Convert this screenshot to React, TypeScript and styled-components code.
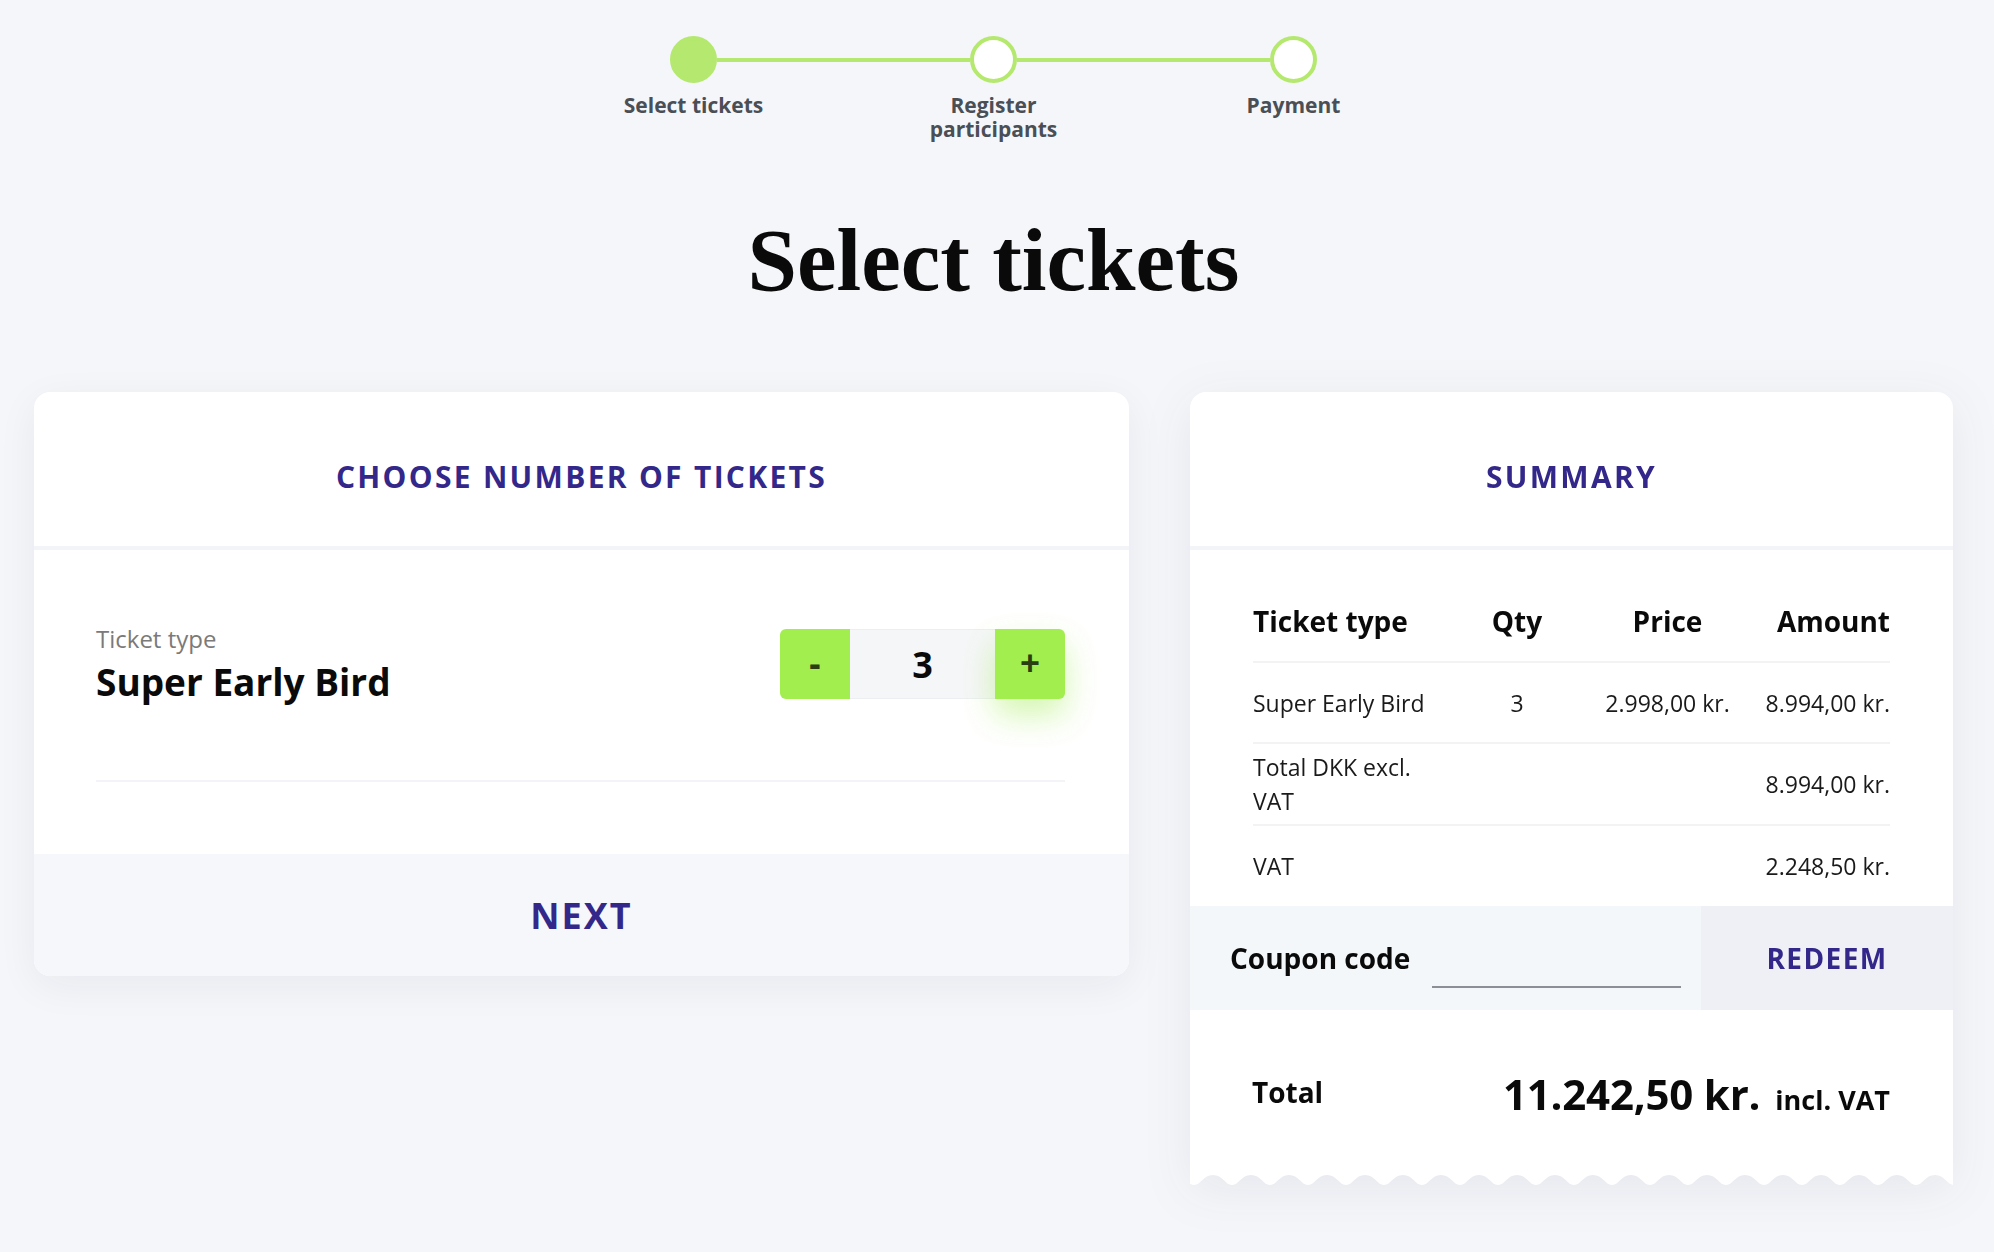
import React from "react";
import styled, { createGlobalStyle } from "styled-components";

const Global = createGlobalStyle`
  html, body { margin: 0; padding: 0; }
  body {
    background: #f5f6f9;
    font-family: "Open Sans", "Noto Sans", Arial, sans-serif;
    color: #111;
  }
  * { box-sizing: border-box; }
`;

const PURPLE = "#33288a";
const GREEN = "#a3ee4f";
const STEP_GREEN = "#b4e86e";

const Page = styled.div`
  width: 1919px;
  margin-left: 34px;
  padding-top: 36px;
  padding-bottom: 60px;
  display: flex;
  flex-direction: column;
  align-items: center;
`;

const Track = styled.div`
  width: 647px;
  display: flex;
  align-items: center;
`;

const Dot = styled.div<{ $done?: boolean }>`
  width: 47px;
  height: 47px;
  border-radius: 50%;
  border: 4px solid ${STEP_GREEN};
  background: ${(p) => (p.$done ? STEP_GREEN : "#fff")};
  flex: none;
`;

const Connector = styled.div`
  flex: 1;
  height: 4px;
  background: ${STEP_GREEN};
`;

const Labels = styled.div`
  margin-top: 10px;
  display: grid;
  grid-template-columns: repeat(3, 300px);
`;

const StepLabel = styled.div`
  text-align: center;
  font-size: 21px;
  line-height: 24px;
  font-weight: 700;
  color: #4a4f56;
  padding: 0 75px;
`;

const Heading = styled.h1`
  margin: 69px 0 0;
  font-family: "Liberation Serif", "Times New Roman", serif;
  font-weight: 700;
  font-size: 89px;
  line-height: 100px;
  color: #0a0a0a;
`;

const Cards = styled.div`
  margin-top: 82px;
  width: 100%;
  display: flex;
  align-items: flex-start;
  gap: 61px;
`;

const Card = styled.section<{ $w: number }>`
  width: ${(p) => p.$w}px;
  background: #fff;
  border-radius: 16px;
  overflow: hidden;
  box-shadow: 0 10px 40px rgba(30, 40, 80, 0.06);
`;

const ReceiptCard = styled.section<{ $w: number }>`
  width: ${(p) => p.$w}px;
  filter: drop-shadow(0 10px 24px rgba(30, 40, 80, 0.07));
`;

const ReceiptBody = styled.div`
  background: #fff;
  border-radius: 16px 16px 0 0;
  overflow: hidden;
`;

const ScallopSvg = styled.svg`
  display: block;
  width: 100%;
  height: 14px;
`;

const CardHeader = styled.header`
  padding: 65px 0 49px;
  text-align: center;
  border-bottom: 4px solid #f2f4f7;
`;

const CardTitle = styled.h2`
  margin: 0;
  font-size: 30px;
  line-height: 40px;
  font-weight: 700;
  letter-spacing: 2.3px;
  color: ${PURPLE};
  text-transform: uppercase;
`;

const CardBody = styled.div`
  padding: 0 64px 72px 62px;
`;

const TicketRow = styled.div`
  display: flex;
  justify-content: space-between;
  align-items: center;
  padding: 74px 0 76px;
  border-bottom: 2px solid #f2f4f7;
`;

const TicketInfo = styled.div`
  display: flex;
  flex-direction: column;
  gap: 6px;
`;

const TicketLabel = styled.div`
  font-size: 24px;
  line-height: 30px;
  color: #7a7a7a;
`;

const TicketName = styled.div`
  font-size: 37px;
  line-height: 44px;
  font-weight: 700;
  color: #0a0a0a;
`;

const Counter = styled.div`
  display: flex;
  height: 70px;
  border-radius: 6px;
`;

const CounterButton = styled.button<{ $side: "left" | "right" }>`
  width: 70px;
  height: 70px;
  border: none;
  background: ${GREEN};
  color: #2b3d12;
  font-family: inherit;
  font-size: 35px;
  font-weight: 700;
  line-height: 1;
  padding: 0 0 4px;
  border-radius: ${(p) => (p.$side === "left" ? "6px 0 0 6px" : "0 6px 6px 0")};
  box-shadow: ${(p) =>
    p.$side === "right" ? "0 16px 32px rgba(160, 236, 80, 0.45)" : "none"};
  cursor: pointer;
`;

const CounterValue = styled.div`
  width: 145px;
  background: #f5f6f8;
  border-top: 1px solid #eceef1;
  border-bottom: 1px solid #eceef1;
  display: flex;
  align-items: center;
  justify-content: center;
  font-size: 36px;
  font-weight: 700;
  color: #0a0a0a;
`;

const FooterButton = styled.button`
  display: block;
  width: 100%;
  height: 122px;
  border: none;
  background: #f5f7fa;
  font-family: inherit;
  font-size: 36px;
  font-weight: 700;
  letter-spacing: 2px;
  color: ${PURPLE};
  cursor: pointer;
`;

const TableWrap = styled.div`
  padding: 31px 63px 0;
`;

const Table = styled.table`
  width: 637px;
  border-collapse: collapse;
  table-layout: fixed;
`;

const Row = styled.tr<{ $last?: boolean }>`
  height: 81px;
  border-bottom: ${(p) => (p.$last ? "none" : "2px solid #f1f3f5")};
`;

type Align = "left" | "center" | "right";

const Th = styled.th<{ $align: Align; $w: number }>`
  width: ${(p) => p.$w}px;
  text-align: ${(p) => p.$align};
  font-size: 28px;
  font-weight: 700;
  color: #0a0a0a;
  padding: 8px 0;
  vertical-align: middle;
`;

const Td = styled.td<{ $align: Align }>`
  text-align: ${(p) => p.$align};
  font-size: 23px;
  line-height: 34px;
  color: #1a1a1a;
  padding: 6px 0;
  vertical-align: middle;
`;

const CouponBar = styled.div`
  display: flex;
  height: 104px;
  background: #f4f7fa;
`;

const CouponField = styled.label`
  flex: 1;
  display: flex;
  align-items: center;
  gap: 22px;
  padding: 0 20px 0 40px;
`;

const CouponLabel = styled.span`
  font-size: 28px;
  font-weight: 700;
  color: #0a0a0a;
  white-space: nowrap;
`;

const CouponInput = styled.input`
  flex: 1;
  min-width: 0;
  width: 0;
  height: 44px;
  align-self: flex-end;
  margin-bottom: 22px;
  border: none;
  border-bottom: 2px solid #8c9096;
  background: transparent;
  font-family: inherit;
  font-size: 22px;
  outline: none;
`;

const RedeemButton = styled.button`
  flex: none;
  width: 252px;
  border: none;
  background: #eef0f5;
  font-family: inherit;
  font-size: 28px;
  font-weight: 700;
  letter-spacing: 1.4px;
  color: ${PURPLE};
  cursor: pointer;
`;

const TotalRow = styled.div`
  height: 163px;
  display: flex;
  align-items: center;
  justify-content: space-between;
  padding: 0 63px 0 62px;
`;

const TotalLabel = styled.span`
  font-size: 28px;
  font-weight: 700;
  color: #0a0a0a;
`;

const TotalAmount = styled.div`
  display: flex;
  align-items: baseline;
  gap: 15px;
  margin-top: 4px;
`;

const BigPrice = styled.span`
  font-size: 42px;
  font-weight: 700;
  letter-spacing: -0.2px;
  color: #0a0a0a;
`;

const VatNote = styled.span`
  font-size: 27px;
  font-weight: 700;
  color: #0a0a0a;
`;

function Scallop() {
  return (
    <ScallopSvg viewBox="0 0 763 14" preserveAspectRatio="none" aria-hidden="true">
      <defs>
        <pattern id="wave" x="4" y="0" width="38" height="14" patternUnits="userSpaceOnUse">
          <path d="M0 0 L0 12 C7 12 9 2 19 2 C29 2 31 12 38 12 L38 0 Z" fill="#fff" />
        </pattern>
      </defs>
      <rect x="0" y="0" width="763" height="14" fill="url(#wave)" />
    </ScallopSvg>
  );
}

export default function App() {
  return (
    <>
      <Global />
      <Page>
        <Track>
          <Dot $done />
          <Connector />
          <Dot />
          <Connector />
          <Dot />
        </Track>
        <Labels>
          <StepLabel>Select tickets</StepLabel>
          <StepLabel>Register participants</StepLabel>
          <StepLabel>Payment</StepLabel>
        </Labels>
        <Heading>Select tickets</Heading>
        <Cards>
          <Card $w={1095}>
            <CardHeader>
              <CardTitle>Choose number of tickets</CardTitle>
            </CardHeader>
            <CardBody>
              <TicketRow>
                <TicketInfo>
                  <TicketLabel>Ticket type</TicketLabel>
                  <TicketName>Super Early Bird</TicketName>
                </TicketInfo>
                <Counter>
                  <CounterButton $side="left">-</CounterButton>
                  <CounterValue>3</CounterValue>
                  <CounterButton $side="right">+</CounterButton>
                </Counter>
              </TicketRow>
            </CardBody>
            <FooterButton>NEXT</FooterButton>
          </Card>
          <ReceiptCard $w={763}>
            <ReceiptBody>
              <CardHeader>
                <CardTitle>Summary</CardTitle>
              </CardHeader>
              <TableWrap>
                <Table>
                  <thead>
                    <Row>
                      <Th $align="left" $w={193}>Ticket type</Th>
                      <Th $align="center" $w={142}>Qty</Th>
                      <Th $align="center" $w={159}>Price</Th>
                      <Th $align="right" $w={143}>Amount</Th>
                    </Row>
                  </thead>
                  <tbody>
                    <Row>
                      <Td $align="left">Super Early Bird</Td>
                      <Td $align="center">3</Td>
                      <Td $align="center">2.998,00 kr.</Td>
                      <Td $align="right">8.994,00 kr.</Td>
                    </Row>
                    <Row>
                      <Td $align="left">Total DKK excl. VAT</Td>
                      <Td $align="center"></Td>
                      <Td $align="center"></Td>
                      <Td $align="right">8.994,00 kr.</Td>
                    </Row>
                    <Row $last>
                      <Td $align="left">VAT</Td>
                      <Td $align="center"></Td>
                      <Td $align="center"></Td>
                      <Td $align="right">2.248,50 kr.</Td>
                    </Row>
                  </tbody>
                </Table>
              </TableWrap>
              <CouponBar>
                <CouponField>
                  <CouponLabel>Coupon code</CouponLabel>
                  <CouponInput type="text" />
                </CouponField>
                <RedeemButton>REDEEM</RedeemButton>
              </CouponBar>
              <TotalRow>
                <TotalLabel>Total</TotalLabel>
                <TotalAmount>
                  <BigPrice>11.242,50 kr.</BigPrice>
                  <VatNote>incl. VAT</VatNote>
                </TotalAmount>
              </TotalRow>
            </ReceiptBody>
            <Scallop />
          </ReceiptCard>
        </Cards>
      </Page>
    </>
  );
}
